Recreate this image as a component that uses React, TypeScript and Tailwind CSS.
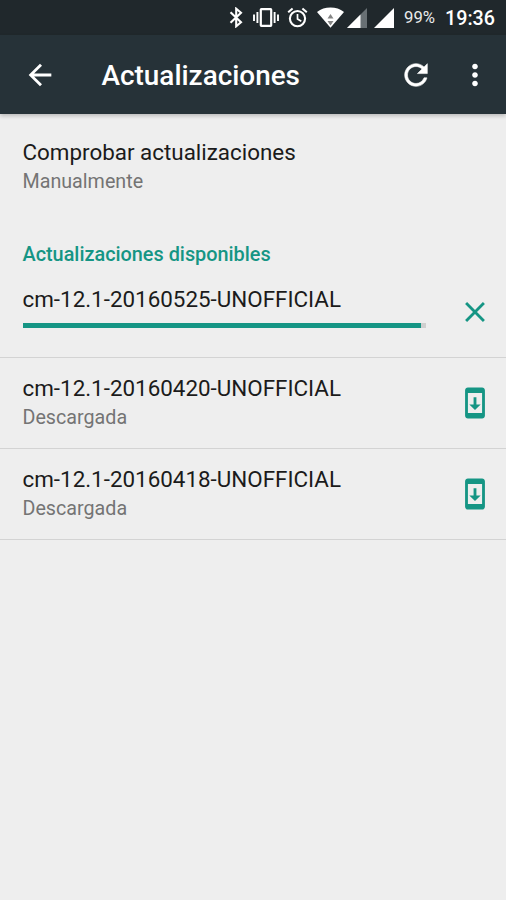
import type { ReactNode } from "react";

type Update = {
  name: string;
  status?: string;
  progress?: number;
};

const updates: Update[] = [
  { name: "cm-12.1-20160525-UNOFFICIAL", progress: 98.8 },
  { name: "cm-12.1-20160420-UNOFFICIAL", status: "Descargada" },
  { name: "cm-12.1-20160418-UNOFFICIAL", status: "Descargada" },
];

export default function App() {
  return (
    <div className="flex h-[900px] w-[506px] flex-col overflow-hidden bg-[#eeeeee] font-['Roboto',sans-serif] text-[#1b1b1b]">
      <StatusBar />
      <Toolbar />

      {/* check for updates */}
      <section className="h-[116px] pt-[23px] pl-[22.5px]">
        <p className="text-[22.4px] leading-[30px]">Comprobar actualizaciones</p>
        <p className="pt-px text-[19.7px] leading-[27px] text-[#747474]">Manualmente</p>
      </section>

      {/* available updates */}
      <h2 className="h-[38px] pt-[11px] pl-[22.5px] text-[19.85px] leading-[28px] font-medium text-[#159584]">
        Actualizaciones disponibles
      </h2>
      {updates.map(update => (
        <UpdateRow key={update.name} update={update} />
      ))}
    </div>
  );
}

/* ================= STATUS BAR ================= */

function StatusBar() {
  return (
    <div className="flex h-[35px] shrink-0 items-start bg-[#20282c] text-white">
      {/* bluetooth */}
      <svg className="mt-[7px] ml-[229px] h-[21px] w-[14px]" viewBox="0 0 14 21" fill="none" stroke="currentColor" strokeWidth="2.1">
        <path d="M1.5 5.2 12 15.2 7.2 19.3V1.7L12 5.8 1.5 15.8" />
      </svg>
      {/* vibrate */}
      <svg className="mt-[7px] ml-[10px] h-[21px] w-[26px]" viewBox="0 0 26 21" fill="none" stroke="currentColor" strokeWidth="2.2">
        <rect x="7.8" y="2.2" width="10.4" height="16.6" rx="0.6" />
        <path d="M1 7.5v6.5M4.4 5v11M21.6 5v11M25 7.5v6.5" strokeWidth="1.9" />
      </svg>
      {/* alarm */}
      <svg className="mt-[7px] ml-[8px] h-[21px] w-[21px]" viewBox="0 0 21 21" fill="none" stroke="currentColor" strokeWidth="2.1">
        <circle cx="10.5" cy="11.6" r="7.6" />
        <path d="M10.5 7v5l3.8 2.3" strokeWidth="1.7" />
        <path d="m1.2 5.2 4.4-3.7M19.8 5.2l-4.4-3.7" />
      </svg>
      {/* wifi with traffic arrows */}
      <svg className="mt-[7px] ml-[9px] h-[21px] w-[27px]" viewBox="0 0 27 21">
        <path d="M0 4.9C3.9 2 8.4.6 13.5.6S23.1 2 27 4.9L13.5 20.7z" fill="currentColor" />
        <path d="m13.5 7 3 4.5h-6zM10.5 14h6l-3 4.5z" fill="#858585" />
      </svg>
      <svg className="mt-[8px] ml-[3px] h-[20px] w-[20px]" viewBox="0 0 20 20">
        <path d="M0 20 20 0v20z" fill="#687074" />
        <path d="M0 20 13.5 6.5V20z" fill="currentColor" />
      </svg>
      <svg className="mt-[8px] ml-[7px] h-[20px] w-[20px]" viewBox="0 0 20 20">
        <path d="M0 20 20 0v20z" fill="currentColor" />
      </svg>
      <span className="mt-[6px] ml-[10px] w-[41px] text-[16.7px] leading-[24px] text-[#e8eaea]">99%</span>
      <span className="mt-[6px] text-[19.7px] leading-[25px] font-medium">19:36</span>
    </div>
  );
}

/* ================= TOOLBAR ================= */

function Toolbar() {
  return (
    <header className="relative flex h-[79px] shrink-0 items-center bg-[#263238] text-white shadow-[0_2px_4px_rgba(0,0,0,0.22)]">
      <button type="button" className="ml-[22.5px]">
        <Icon>
          <path d="M20 11H7.83l5.59-5.59L12 4l-8 8 8 8 1.41-1.41L7.83 13H20v-2z" />
        </Icon>
      </button>
      <h1 className="ml-[45px] grow pt-[2px] text-[27.9px] leading-[34px] font-medium">
        Actualizaciones
      </h1>
      <button type="button" className="mr-[25px]">
        <Icon>
          <path
            stroke="currentColor"
            strokeWidth="0.4"
            d="M17.65 6.35C16.2 4.9 14.21 4 12 4c-4.42 0-7.99 3.58-7.99 8s3.57 8 7.99 8c3.73 0 6.84-2.55 7.73-6h-2.08c-.82 2.33-3.04 4-5.65 4-3.31 0-6-2.69-6-6s2.69-6 6-6c1.66 0 3.14.69 4.22 1.78L13 11h7V4l-2.35 2.35z"
          />
        </Icon>
      </button>
      <button type="button" className="mr-[14px]">
        <Icon>
          <path d="M12 8c1.1 0 2-.9 2-2s-.9-2-2-2-2 .9-2 2 .9 2 2 2zm0 2c-1.1 0-2 .9-2 2s.9 2 2 2 2-.9 2-2-.9-2-2-2zm0 6c-1.1 0-2 .9-2 2s.9 2 2 2 2-.9 2-2-.9-2-2-2z" />
        </Icon>
      </button>
    </header>
  );
}

/* ================= UPDATE ROW ================= */

function UpdateRow({ update }: { update: Update }) {
  const downloading = update.progress !== undefined;

  return (
    <div
      className={[
        "flex shrink-0 items-center border-b border-[#d3d3d3] pr-[14px] pl-[22.5px]",
        downloading ? "h-[90px]" : "h-[91px]",
      ].join(" ")}
    >
      <div className={["h-full w-[403px]", downloading ? "pt-[16px]" : "pt-[15px]"].join(" ")}>
        <p className="text-[22.4px] leading-[30px]">{update.name}</p>
        {downloading ? (
          <div className="mt-[9px] h-[5px] bg-[#cfcfcf]">
            <div className="h-full bg-[#159584]" style={{ width: `${update.progress}%` }} />
          </div>
        ) : (
          <p className="pt-px text-[19.7px] leading-[27px] text-[#747474]">{update.status}</p>
        )}
      </div>
      <button
        type="button"
        className={["ml-auto text-[#159584]", downloading ? "pb-[2px]" : ""].join(" ")}
      >
        <Icon>
          {downloading ? (
            <path d="M19 6.41L17.59 5 12 10.59 6.41 5 5 6.41 10.59 12 5 17.59 6.41 19 12 13.41 17.59 19 19 17.59 13.41 12z" />
          ) : (
            <path d="M17 1.01L7 1c-1.1 0-2 .9-2 2v18c0 1.1.9 2 2 2h10c1.1 0 2-.9 2-2V3c0-1.1-.9-1.99-2-1.99zM17 19H7V5h10v14zm-1-6h-3V8h-2v5H8l4 4 4-4z" />
          )}
        </Icon>
      </button>
    </div>
  );
}

function Icon({ children }: { children: ReactNode }) {
  return (
    <svg className="block h-[34px] w-[34px]" viewBox="0 0 24 24" fill="currentColor">
      {children}
    </svg>
  );
}
